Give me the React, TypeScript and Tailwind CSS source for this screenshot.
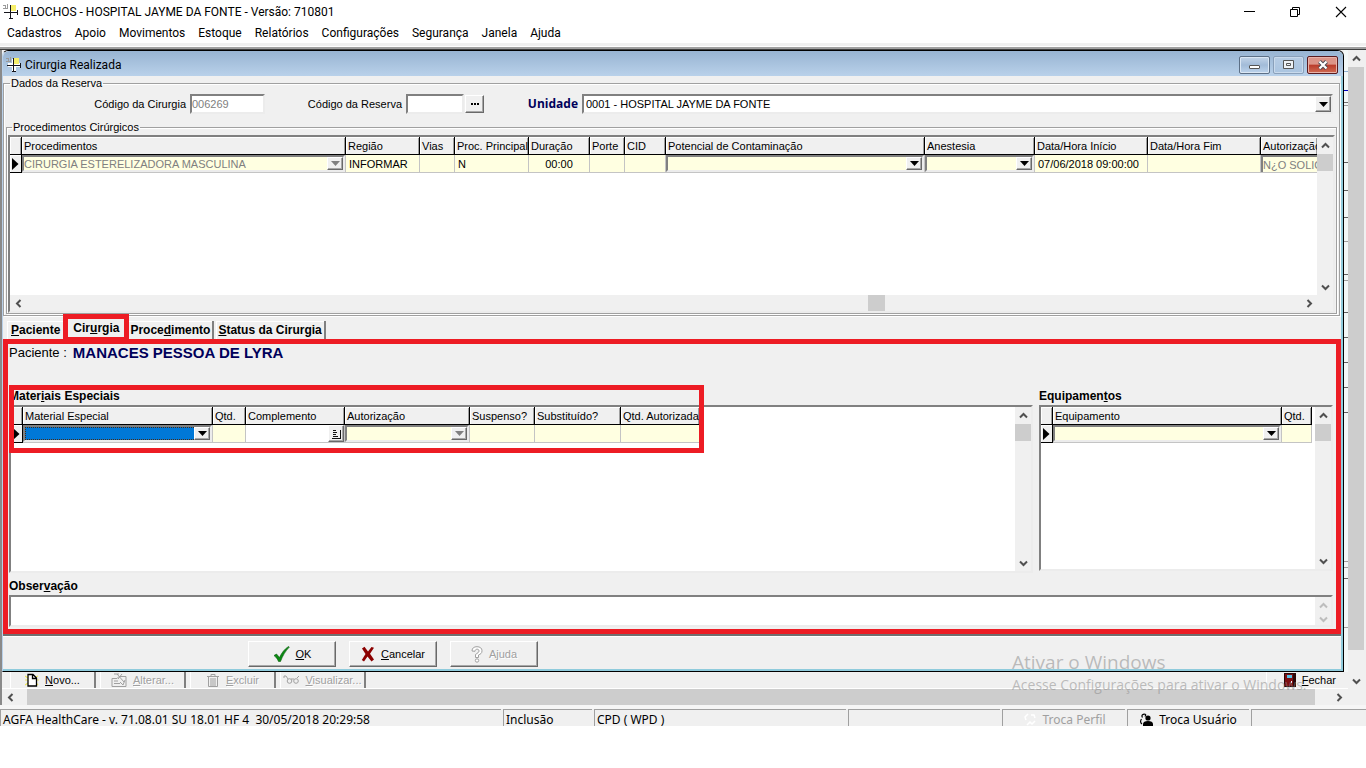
import type { ReactNode } from "react";

const SUNKEN =
  "border-2 border-t-[#808080] border-l-[#808080] border-r-[#ececec] border-b-[#ececec]";
const RAISED =
  "border border-t-white border-l-white border-r-[#696969] border-b-[#696969] shadow-[inset_-1px_-1px_0_#a8a8a8] bg-[#f0f0f0]";

function AppIcon() {
  return (
    <svg width="16" height="16" viewBox="0 0 16 16" shapeRendering="crispEdges" aria-hidden="true" className="shrink-0">
      <path d="M0 1h3v1H0zM2 1h1v3H2zM4 0h1v4H4zM0 4h5v1H0z" fill="#9a9a9a" />
      <path d="M6 2h4v13H6zM2 6h12v4H2z" fill="#ffffff" />
      <path d="M8 1h5v6H8z" fill="#f7ef6a" />
      <path d="M7 1h1v14H7zM1 8h13v1H1z" fill="#15151c" />
      <path d="M14 6h1v5h-1zM6 14h4v1H6z" fill="#15151c" />
    </svg>
  );
}

const chevrons = {
  up: "M1 6.5 4.5 3 8 6.5",
  down: "M1 2.5 4.5 6 8 2.5",
  left: "M6.5 1 3 4.5 6.5 8",
  right: "M2.5 1 6 4.5 2.5 8",
};

function Chevron({ dir, faint }: { dir: keyof typeof chevrons; faint?: boolean }) {
  return (
    <svg width="9" height="9" viewBox="0 0 9 9" aria-hidden="true">
      <path d={chevrons[dir]} fill="none" stroke={faint ? "#bdbdbd" : "#505050"} strokeWidth="2" />
    </svg>
  );
}

function ScrollButton({ dir, label, faint }: { dir: keyof typeof chevrons; label: string; faint?: boolean }) {
  return (
    <button type="button" aria-label={label} className="flex h-4 w-4 shrink-0 items-center justify-center">
      <Chevron dir={dir} faint={faint} />
    </button>
  );
}

function GridScroll() {
  return (
    <div className="flex w-4 shrink-0 flex-col bg-[#f0f0f0]">
      <ScrollButton dir="up" label="Rolar para cima" />
      <div className="mt-px h-[17px] bg-[#cdcdcd]" />
      <div className="flex-1" />
      <ScrollButton dir="down" label="Rolar para baixo" />
    </div>
  );
}

function Combo({
  label,
  id,
  value = "",
  disabled,
  selected,
  tall,
}: {
  label?: string;
  id?: string;
  value?: string;
  disabled?: boolean;
  selected?: boolean;
  tall?: boolean;
}) {
  return (
    <div className={`relative flex w-full min-w-0 ${SUNKEN} ${tall ? "h-5 bg-white" : "h-[17px] bg-[#ffffe1]"}`}>
      <select
        id={id}
        aria-label={label}
        disabled={disabled}
        className={`h-full w-full appearance-none pr-4 text-[11px] leading-3 opacity-100 outline-none ${
          tall ? "pl-0.5" : ""
        } ${disabled ? "text-[#808080]" : "text-black"} ${
          selected ? "border border-dotted border-[#4a2a10] bg-[#0078d7]" : "bg-transparent"
        }`}
      >
        <option>{value}</option>
      </select>
      <span
        className={`pointer-events-none absolute inset-y-0 right-0 flex w-4 items-center justify-center ${RAISED}`}
      >
        <svg width="9" height="5" viewBox="0 0 9 5" aria-hidden="true">
          <path d="M0 0h9L4.500 5z" fill={disabled ? "#808080" : "#000"} />
        </svg>
      </span>
    </div>
  );
}

function Th({ children, className = "" }: { children?: ReactNode; className?: string }) {
  return (
    <th
      scope="col"
      className={`h-[18px] overflow-hidden border-r border-b border-black bg-[#f0f0f0] p-0 pl-0.5 text-left font-normal whitespace-nowrap shadow-[inset_1px_1px_0_#fff,inset_-1px_0_0_#a0a0a0] ${className}`}
    >
      {children}
    </th>
  );
}

function Td({ children, className = "" }: { children?: ReactNode; className?: string }) {
  return (
    <td
      className={`h-[18px] overflow-hidden border-r border-b border-[#c4c4c4] p-0 leading-3 whitespace-nowrap ${
        className.includes("bg-") ? "" : "bg-[#ffffe1]"
      } ${className}`}
    >
      {children}
    </td>
  );
}

function RowMarker() {
  return (
    <td className="h-[18px] border-r border-b border-black bg-[#f0f0f0] p-0 shadow-[inset_1px_1px_0_#fff]">
      <svg width="7" height="12" viewBox="0 0 7 12" aria-label="Linha atual" className="ml-0.5">
        <path d="M0 0 6.500 6 0 12z" fill="#000" />
      </svg>
    </td>
  );
}

function ProceduresTable() {
  return (
    <table className="w-full table-fixed border-separate border-spacing-0">
      <colgroup>
        <col className="w-[12px]" />
        <col className="w-[324px]" />
        <col className="w-[74px]" />
        <col className="w-[35px]" />
        <col className="w-[74px]" />
        <col className="w-[61px]" />
        <col className="w-[35px]" />
        <col className="w-[41px]" />
        <col className="w-[259px]" />
        <col className="w-[110px]" />
        <col className="w-[113px]" />
        <col className="w-[113px]" />
        <col />
      </colgroup>
      <thead>
        <tr>
          <Th />
          <Th>Procedimentos</Th>
          <Th>Região</Th>
          <Th>Vias</Th>
          <Th>Proc. Principal</Th>
          <Th>Duração</Th>
          <Th>Porte</Th>
          <Th>CID</Th>
          <Th>Potencial de Contaminação</Th>
          <Th>Anestesia</Th>
          <Th>Data/Hora Início</Th>
          <Th>Data/Hora Fim</Th>
          <Th className="border-r-0">Autorização</Th>
        </tr>
      </thead>
      <tbody>
        <tr>
          <RowMarker />
          <Td>
            <Combo label="Procedimento" value="CIRURGIA ESTERELIZADORA MASCULINA" disabled />
          </Td>
          <Td className="pl-[3px]">INFORMAR</Td>
          <Td />
          <Td className="pl-[3px]">N</Td>
          <Td className="text-center">00:00</Td>
          <Td />
          <Td />
          <Td>
            <Combo label="Potencial de Contaminação" />
          </Td>
          <Td>
            <Combo label="Anestesia" />
          </Td>
          <Td className="pl-[3px]">07/06/2018 09:00:00</Td>
          <Td />
          <Td className="border-r-0">
            <div className="flex h-[17px] items-center border-t-2 border-l-2 border-[#808080] text-[#808080]">
              N¿O SOLICITADA
            </div>
          </Td>
        </tr>
      </tbody>
    </table>
  );
}

function MaterialsTable() {
  return (
    <table className="w-[689px] table-fixed border-separate border-spacing-0">
      <colgroup>
        <col className="w-[12px]" />
        <col className="w-[190px]" />
        <col className="w-[33px]" />
        <col className="w-[99px]" />
        <col className="w-[125px]" />
        <col className="w-[65px]" />
        <col className="w-[86px]" />
        <col className="w-[79px]" />
      </colgroup>
      <thead>
        <tr>
          <Th />
          <Th>Material Especial</Th>
          <Th>Qtd.</Th>
          <Th>Complemento</Th>
          <Th>Autorização</Th>
          <Th>Suspenso?</Th>
          <Th>Substituído?</Th>
          <Th>Qtd. Autorizada</Th>
        </tr>
      </thead>
      <tbody>
        <tr>
          <RowMarker />
          <Td>
            <Combo label="Material Especial" selected />
          </Td>
          <Td />
          <Td className="bg-white">
            <div className="flex justify-end">
              <button
                type="button"
                aria-label="Editar complemento"
                className={`flex h-[17px] w-4 items-center justify-center ${RAISED}`}
              >
                <svg width="9" height="10" viewBox="0 0 9 10" shapeRendering="crispEdges" aria-hidden="true">
                  <path d="M1 1h3v1H1zM1 3h4v1H1zM1 5h3v1H1zM1 7h5v1H1zM0 9h9v1H0zM8 1h1v9H8z" fill="#111" />
                </svg>
              </button>
            </div>
          </Td>
          <Td>
            <Combo label="Autorização" disabled />
          </Td>
          <Td />
          <Td />
          <Td />
        </tr>
      </tbody>
    </table>
  );
}

function EquipmentTable() {
  return (
    <table className="w-[271px] table-fixed border-separate border-spacing-0">
      <colgroup>
        <col className="w-[12px]" />
        <col className="w-[229px]" />
        <col className="w-[30px]" />
      </colgroup>
      <thead>
        <tr>
          <Th />
          <Th>Equipamento</Th>
          <Th>Qtd.</Th>
        </tr>
      </thead>
      <tbody>
        <tr>
          <RowMarker />
          <Td>
            <Combo label="Equipamento" />
          </Td>
          <Td />
        </tr>
      </tbody>
    </table>
  );
}

function Tab({ children, active, first }: { children: ReactNode; active?: boolean; first?: boolean }) {
  if (active) {
    return (
      <button
        type="button"
        role="tab"
        aria-selected="true"
        className="relative flex h-full w-[64px] items-center justify-center font-bold"
      >
        {children}
        <span className="pointer-events-none absolute -inset-x-px -top-0.5 -bottom-[3px] border-5 border-[#ed1c24]" />
      </button>
    );
  }
  return (
    <button
      type="button"
      role="tab"
      aria-selected="false"
      className={`mt-[5px] flex h-[18px] items-center font-bold shadow-[inset_1px_1px_0_#fff] ${
        first ? "px-1" : "mr-0.5 border-r-2 border-[#808080] px-0.5"
      }`}
    >
      {children}
    </button>
  );
}

function ActionButton({ icon, children, disabled }: { icon: ReactNode; children: ReactNode; disabled?: boolean }) {
  return (
    <button
      type="button"
      disabled={disabled}
      className={`flex h-[26px] w-[88px] items-center justify-center gap-1.5 ${RAISED} ${
        disabled ? "text-[#a0a0a0] text-shadow-[1px_1px_0_#fff]" : ""
      }`}
    >
      {icon}
      <span>{children}</span>
    </button>
  );
}

function ToolButton({ icon, children, disabled }: { icon: ReactNode; children: ReactNode; disabled?: boolean }) {
  return (
    <button
      type="button"
      disabled={disabled}
      className={`flex h-4 w-[86px] items-center justify-center gap-1.5 border-r-2 border-l border-r-[#808080] border-l-white ${
        disabled ? "text-[#a0a0a0] text-shadow-[1px_1px_0_#fff]" : ""
      }`}
    >
      {icon}
      <span>{children}</span>
    </button>
  );
}

function StatusCell({ children, className = "" }: { children?: ReactNode; className?: string }) {
  return (
    <div
      className={`flex h-[17px] shrink-0 items-center gap-1.5 border-t border-l border-[#a0a0a0] px-0.5 pt-1 whitespace-nowrap ${className}`}
    >
      {children}
    </div>
  );
}

const menus = ["Cadastros", "Apoio", "Movimentos", "Estoque", "Relatórios", "Configurações", "Segurança", "Janela", "Ajuda"];

/* Edges of the window behind: distance from the previous mark, and colour. */
const edgeMarks: [number, string][] = [
  [22, "#8fb1d3"],
  [19, "#0000c0"],
  [12, "#707070"],
  [3, "#a0a0a0"],
  [57, "#606060"],
  [28, "#606060"],
  [27, "#606060"],
  [24, "#a0a0a0"],
  [33, "#606060"],
  [6, "#a0a0a0"],
  [32, "#606060"],
  [25, "#606060"],
  [25, "#606060"],
  [25, "#606060"],
  [25, "#606060"],
  [149, "#a0a0a0"],
  [6, "#a0a0a0"],
  [11, "#606060"],
  [49, "#a0a0a0"],
];

export default function App() {
  return (
    <div className="relative flex min-h-screen flex-col overflow-hidden bg-white font-['Liberation_Sans',Arial,sans-serif] text-[11px] leading-[14px] text-black">
      <header className="font-[Roboto,'Noto_Sans',sans-serif] text-[12px]">
        <div className="flex h-[22px] items-center pt-0.5 pl-[3px]">
          <AppIcon />
          <h1 className="ml-1 flex-1">BLOCHOS - HOSPITAL JAYME DA FONTE - Versão: 710801</h1>
          <div className="flex gap-[34px] pr-[19px]">
            <button type="button" aria-label="Minimizar">
              <svg width="12" height="12" viewBox="0 0 12 12" shapeRendering="crispEdges">
                <path d="M1 5h11v1H1z" />
              </svg>
            </button>
            <button type="button" aria-label="Restaurar">
              <svg width="12" height="12" viewBox="0 0 12 12" fill="none" stroke="#000">
                <path d="M1.500 3.500h7v7h-7zM3.500 3.500v-2h7v7h-2" />
              </svg>
            </button>
            <button type="button" aria-label="Fechar aplicação">
              <svg width="12" height="12" viewBox="0 0 12 12" fill="none" stroke="#000" strokeWidth="1.100">
                <path d="M1 1l10 10M11 1 1 11" />
              </svg>
            </button>
          </div>
        </div>
        <nav className="flex h-[21px] items-center gap-[13px] pl-[7px]">
          {menus.map((m) => (
            <button type="button" key={m}>
              {m}
            </button>
          ))}
        </nav>
        <div className="h-1 border-b border-white bg-[#f0f0f0]" />
        <div className="h-[3px] border-b border-[#404040] bg-[#a0a0a0]" />
      </header>

      <main className="border-r-2 border-l-2 border-r-[#f0f0f0] border-l-[#8a8a8a] bg-[#f0f0f0]">
        <div className="flex">
          <div className="min-w-0 flex-1">
            <div className="flex">
              <section
                aria-labelledby="child-title"
                className="min-w-0 flex-1 rounded-t-md border border-t-black border-r-black border-b-black border-l-[#b9d1ea] bg-[#f0f0f0] shadow-[inset_-2px_-2px_0_#8fcbdc]"
              >
                <div className="flex h-[25px] items-center rounded-t-md bg-linear-to-b from-[#98b4d2] to-[#b9d1ea] pt-0.5 pr-[5px] pl-[3px] font-[Roboto,'Noto_Sans',sans-serif] text-[12px]">
                  <AppIcon />
                  <h2 id="child-title" className="ml-[3px] flex-1">
                    Cirurgia Realizada
                  </h2>
                  <div className="flex gap-[3px]">
                    <button
                      type="button"
                      aria-label="Minimizar janela"
                      className="flex h-[18px] w-[31px] items-center justify-center rounded-xs border border-[#5c6f86] bg-linear-to-b from-[#c3d4e8] via-[#a2bbd8] to-[#bcd3ec] pt-1 shadow-[inset_0_0_0_1px_#dbe7f4]"
                    >
                      <span className="h-1 w-[11px] rounded-[1px] border border-[#555] bg-white" />
                    </button>
                    <button
                      type="button"
                      aria-label="Maximizar janela"
                      className="flex h-[18px] w-[31px] items-center justify-center rounded-xs border border-[#8aa0ba] bg-linear-to-b from-[#b7cce4] to-[#aac4e0] shadow-[inset_0_0_0_1px_#c9daec]"
                    >
                      <svg width="11" height="9" viewBox="0 0 11 9" fill="#eef2f6" stroke="#555">
                        <path d="M.5.5h10v8H.5z" />
                        <path d="M3.500 3.500h4v2h-4z" />
                      </svg>
                    </button>
                    <button
                      type="button"
                      aria-label="Fechar janela"
                      className="flex h-[18px] w-[31px] items-center justify-center rounded-xs border border-[#5a1a1e] bg-linear-to-b from-[#dc9488] from-45% via-[#b93a2a] via-50% to-[#cf6a52] shadow-[inset_0_0_0_1px_#e9b2a8]"
                    >
                      <svg width="12" height="10" viewBox="0 0 12 10" fill="none">
                        <path d="M2.500 1.500l7 7M9.500 1.500l-7 7" stroke="#4a4a55" strokeWidth="4" />
                        <path d="M2.500 1.500l7 7M9.500 1.500l-7 7" stroke="#fff" strokeWidth="2.200" />
                      </svg>
                    </button>
                  </div>
                </div>

                <div className="pt-px pr-[3px]">
                  <fieldset className="min-w-0 border border-[#a0a0a0] px-0.5 pb-px shadow-[inset_1px_1px_0_#fff,1px_1px_0_#fff]">
                    <legend className="ml-1 h-3 px-px leading-3">Dados da Reserva</legend>
                    <div className="mt-[5px] flex h-5 items-center">
                      <label htmlFor="cod-cirurgia" className="w-[184px] shrink-0 pr-1 text-right">
                        Código da Cirurgia
                      </label>
                      <input
                        id="cod-cirurgia"
                        readOnly
                        defaultValue="006269"
                        className={`h-5 w-[75px] bg-white text-[11px] leading-3 text-[#808080] outline-none ${SUNKEN}`}
                      />
                      <label htmlFor="cod-reserva" className="w-[141px] shrink-0 pr-1 text-right">
                        Código da Reserva
                      </label>
                      <input id="cod-reserva" className={`h-5 w-[58px] bg-white outline-none ${SUNKEN}`} />
                      <button
                        type="button"
                        aria-label="Procurar reserva"
                        className={`ml-px flex h-[18px] w-[19px] items-center justify-center ${RAISED}`}
                      >
                        <svg width="8" height="2" viewBox="0 0 8 2" aria-hidden="true">
                          <path d="M0 0h2v2H0zM3 0h2v2H3zM6 0h2v2H6z" />
                        </svg>
                      </button>
                      <label
                        htmlFor="unidade"
                        className="w-[98px] shrink-0 pr-1 text-right font-['Open_Sans','Noto_Sans',sans-serif] text-[12px] font-bold text-[#00005a]"
                      >
                        Unidade
                      </label>
                      <div className="min-w-0 flex-1 pr-1">
                        <Combo id="unidade" value="0001 - HOSPITAL JAYME DA FONTE" tall />
                      </div>
                    </div>
                    <fieldset className="mt-[7px] min-w-0 border border-[#a0a0a0] px-px shadow-[inset_1px_1px_0_#fff,1px_1px_0_#fff]">
                      <legend className="ml-1 h-3 px-px leading-3">Procedimentos Cirúrgicos</legend>
                      <div className={`mt-0.5 flex h-[178px] flex-col bg-white ${SUNKEN}`}>
                        <div className="flex min-h-0 flex-1">
                          <div className="min-w-0 flex-1 overflow-hidden">
                            <ProceduresTable />
                          </div>
                          <GridScroll />
                        </div>
                        <div className="flex h-4 bg-[#f0f0f0] pr-4">
                          <ScrollButton dir="left" label="Rolar para a esquerda" />
                          <div className="flex-[843]" />
                          <div className="w-[17px] bg-[#cdcdcd]" />
                          <div className="flex-[417]" />
                          <ScrollButton dir="right" label="Rolar para a direita" />
                        </div>
                      </div>
                    </fieldset>
                  </fieldset>
                </div>

                <div role="tablist" className="flex h-[23px] pl-1 text-[12px]">
                  <Tab first>
                    <span>
                      <u>P</u>aciente
                    </span>
                  </Tab>
                  <Tab active>
                    <span>
                      Cir<u>u</u>rgia
                    </span>
                  </Tab>
                  <Tab>
                    <span>
                      Proce<u>d</u>imento
                    </span>
                  </Tab>
                  <Tab>
                    <span>
                      <u>S</u>tatus da Cirurgia
                    </span>
                  </Tab>
                </div>

                <div role="tabpanel" className="relative pt-[7px] pr-2.5 pb-[7px] pl-1.5">
                  <p className="flex gap-1.5 text-[13px]">
                    <span>Paciente :</span>
                    <strong className="text-[15px] text-[#00005a]">MANACES PESSOA DE LYRA</strong>
                  </p>
                  <div className="mt-[29px] flex items-start gap-1.5">
                    <div className="relative min-w-0 flex-1">
                      <h3 className="mb-0.5 text-[12px] leading-[14px] font-bold">
                        Mater<u>i</u>ais Especiais
                      </h3>
                      <div className={`flex h-[168px] bg-white ${SUNKEN}`}>
                        <div className="min-w-0 flex-1 overflow-hidden">
                          <MaterialsTable />
                        </div>
                        <GridScroll />
                      </div>
                      <span className="pointer-events-none absolute -top-1 left-0 h-[68px] w-[695px] border-5 border-[#ed1c24]" />
                    </div>
                    <div className="w-[294px] shrink-0">
                      <h3 className="mb-0.5 text-[12px] leading-[14px] font-bold">
                        Equipamen<u>t</u>os
                      </h3>
                      <div className={`flex h-[166px] bg-white ${SUNKEN}`}>
                        <div className="min-w-0 flex-1 overflow-hidden">
                          <EquipmentTable />
                        </div>
                        <GridScroll />
                      </div>
                    </div>
                  </div>
                  <label htmlFor="observacao" className="mt-1.5 mb-0.5 block text-[12px] leading-[14px] font-bold">
                    Obser<u>v</u>ação
                  </label>
                  <div className={`flex h-8 bg-white ${SUNKEN}`}>
                    <textarea id="observacao" className="min-w-0 flex-1 resize-none outline-none" />
                    <div className="flex w-4 flex-col bg-[#f0f0f0]">
                      <ScrollButton dir="up" label="Rolar observação para cima" faint />
                      <button
                        type="button"
                        aria-label="Rolar observação para baixo"
                        className="flex h-3 w-4 items-center justify-center"
                      >
                        <Chevron dir="down" faint />
                      </button>
                    </div>
                  </div>
                  <span className="pointer-events-none absolute inset-y-0 right-0.5 left-0 border-5 border-[#ed1c24]" />
                </div>

                <div className="mr-0.5 flex h-[37px] items-start gap-[13px] border-t-2 border-[#707070] pt-[5px] pl-[245px] shadow-[inset_0_1px_0_#fff]">
                  <ActionButton
                    icon={
                      <svg width="17" height="16" viewBox="0 0 17 16" aria-hidden="true">
                        <path d="M1 9.500 3.500 8l3 3.500C8.500 7 11.500 3 15.500.5l.8.6C12.500 5 9.500 10 7.500 15.500H5.500C4.500 13 3 11 1 9.500z" fill="#0a8a12" stroke="#065a0b" strokeWidth=".6" />
                      </svg>
                    }
                  >
                    <u>O</u>K
                  </ActionButton>
                  <ActionButton
                    icon={
                      <svg width="14" height="16" viewBox="0 0 14 16" aria-hidden="true">
                        <path d="M1 2.500 3.500.8 7 5.500 10.500 1l2.500.8L9 7.800l4 5.700-2.500 2L6.500 10.500 3 15.500.8 14 4.500 8z" fill="#8b0000" />
                      </svg>
                    }
                  >
                    <u>C</u>ancelar
                  </ActionButton>
                  <ActionButton
                    disabled
                    icon={
                      <svg width="12" height="17" viewBox="0 0 12 17" fill="#fff" stroke="#a0a0a0" aria-hidden="true">
                        <path d="M1 5C1 2 3 .7 6 .7S11 2.200 11 4.800 9.500 8 7.500 9v2.500h-3V8.500C6.500 7 8 6.500 8 5S7 3.200 6 3.200 4 4 4 5.300z" />
                        <circle cx="6" cy="14.500" r="1.700" />
                      </svg>
                    }
                  >
                    Ajuda
                  </ActionButton>
                </div>
              </section>

              <div className="w-1 shrink-0 overflow-hidden bg-[#f3f8f8]">
                {edgeMarks.map(([gap, color], i) => (
                  <div key={i} className="border-b" style={{ height: gap, borderColor: color }} />
                ))}
              </div>
            </div>

            <div className="flex h-[17px] items-start gap-1 overflow-hidden border-b border-white pl-2">
              <ToolButton
                icon={
                  <svg width="14" height="14" viewBox="0 0 14 14" aria-hidden="true">
                    <path d="M0 3l3 2M0 7h3M0 12l3-2M13 3l-2 1M14 7h-3M13 12l-2-2" stroke="#f0e65a" strokeWidth="1.200" />
                    <path d="M3 1.500h5L11.500 5v8H3zM7.500 1.500V5.500h4" fill="#fff" stroke="#000" strokeWidth="1.300" />
                  </svg>
                }
              >
                <u>N</u>ovo...
              </ToolButton>
              <ToolButton
                disabled
                icon={
                  <svg width="16" height="14" viewBox="0 0 16 14" fill="none" stroke="#a0a0a0" aria-hidden="true">
                    <path d="M1 5.500h5l2-2h7v10H1zM3 8h4M3 10.500h6M6 1l7 8M11 1 7 6M9 9l3 3 2-5M3 1h5" />
                  </svg>
                }
              >
                <u>A</u>lterar...
              </ToolButton>
              <ToolButton
                disabled
                icon={
                  <svg width="14" height="14" viewBox="0 0 14 14" fill="none" stroke="#a0a0a0" aria-hidden="true">
                    <path d="M1 3.500h12M5 3V1.500h4V3M2.500 3.500v10h9v-10M5 5v8M7 5v8M9 5v8" />
                  </svg>
                }
              >
                <u>E</u>xcluir
              </ToolButton>
              <ToolButton
                disabled
                icon={
                  <svg width="18" height="10" viewBox="0 0 18 10" fill="none" stroke="#a0a0a0" aria-hidden="true" className="-mr-0.5">
                    <path d="M1 3V1h2l2 3M8 4h3M14 3l2-2" />
                    <circle cx="6.500" cy="6" r="2.300" />
                    <circle cx="13" cy="6" r="2.300" />
                  </svg>
                }
              >
                <u>V</u>isualizar...
              </ToolButton>
              <div className="flex-1" />
              <button type="button" className="flex h-4 w-[82px] items-center justify-end gap-1.5 border-l border-white pr-3">
                <svg width="12" height="14" viewBox="0 0 12 14" aria-hidden="true">
                  <path d="M0 0h12v14H0z" fill="#2a0808" />
                  <path d="M1 1h8v12H1z" fill="#7d0f12" />
                  <path d="M3 2h5v3H3z" fill="#58c4e8" />
                  <path d="M7 8h1v2H7z" fill="#fff" />
                </svg>
                <span>
                  <u>F</u>echar
                </span>
              </button>
            </div>
          </div>

          <div className="flex w-4 shrink-0 flex-col bg-[#f0f0f0]">
            <ScrollButton dir="up" label="Rolar área para cima" />
            <div className="mt-px mb-[23px] flex-1 bg-[#cdcdcd]" />
            <ScrollButton dir="down" label="Rolar área para baixo" />
          </div>
        </div>

        <div className="flex h-4 bg-[#f0f0f0]">
          <ScrollButton dir="left" label="Rolar área para a esquerda" />
          <div className="mr-4 ml-[9px] flex-1 bg-[#cdcdcd]" />
          <ScrollButton dir="right" label="Rolar área para a direita" />
          <div className="w-[17px]" />
        </div>
      </main>

      <footer className="flex gap-0.5 overflow-hidden border-t-4 border-[#f6f6f6] bg-[#f0f0f0] font-['Noto_Sans',sans-serif] text-[12px]">
        <StatusCell className="w-[501px]">
          <span className="whitespace-pre">{"AGFA HealthCare - v. 71.08.01 SU 18.01 HF 4  30/05/2018 20:29:58"}</span>
        </StatusCell>
        <StatusCell className="w-[89px]">Inclusão</StatusCell>
        <StatusCell className="w-[252px]">CPD ( WPD )</StatusCell>
        <StatusCell className="w-[152px]" />
        <StatusCell className="w-[123px] justify-center text-[#a0a0a0]">
          <svg width="14" height="14" viewBox="0 0 14 14" fill="none" stroke="#fff" strokeWidth="1.500" aria-hidden="true">
            <path d="M5 1 2 4l1 3M8 2h3l1 3M4 12l3-3 2 2 3-3" />
          </svg>
          Troca Perfil
        </StatusCell>
        <StatusCell className="w-[122px] justify-center">
          <svg width="13" height="15" viewBox="0 0 13 15" aria-hidden="true">
            <circle cx="8" cy="5" r="2.600" />
            <path d="M3 14v-3c0-2 2-3 5-3s5 1 5 3v3z" />
            <path d="M6 1.500C3 .5 1 2 2.500 4.500M1.500 6C0 8 .5 10 2 11M6 1.500 5 3.500" fill="none" stroke="#000" strokeWidth="1.200" />
          </svg>
          Troca Usuário
        </StatusCell>
        <StatusCell className="min-w-0 flex-1 shrink" />
      </footer>

      <aside className="pointer-events-none absolute top-[652px] right-[54px] w-[300px] font-['Open_Sans','Noto_Sans',sans-serif] whitespace-nowrap text-[#8c8c8c]/55">
        <p className="text-[19px] leading-5">Ativar o Windows</p>
        <p className="mt-1.5 text-[14px] leading-[14px]">Acesse Configurações para ativar o Windows.</p>
      </aside>
    </div>
  );
}
